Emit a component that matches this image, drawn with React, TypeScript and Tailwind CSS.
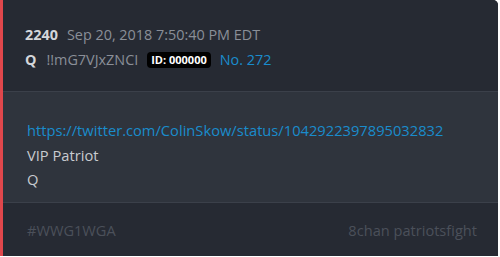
export default function App() {
  return (
    <div className="w-[500px] h-[257px] bg-white" style={{ fontFamily: '"Open Sans", sans-serif' }}>
      <div className="w-[498px] h-[256px] flex flex-col border-l-[3px] border-[#e0474c] rounded-tr-[5px] overflow-hidden bg-[#2f343d]">
        <div className="h-[92px] bg-[#262a33] border-b border-[#3b404a] pl-[22px] pt-[25px] flex flex-col gap-[5px]">
          <div className="flex items-baseline gap-[9px] text-[14.4px] leading-[20px]">
            <span className="font-bold text-[#d4d6da]">2240</span>
            <span className="text-[#8a8f98]">Sep 20, 2018 7:50:40 PM EDT</span>
          </div>
          <div className="flex items-center text-[14.4px] leading-[20px]">
            <span className="font-bold text-[#d4d6da]">Q</span>
            <span className="text-[#8a8f98] ml-[10px]">!!mG7VJxZNCI</span>
            <span className="ml-[9px] bg-black text-white font-bold text-[11px] leading-[16px] px-[4px] rounded-[4px]">ID: 000000</span>
            <span className="ml-[9px] text-[#1a8ccc]">No. 272</span>
          </div>
        </div>
        <div className="h-[111px] bg-[#2f343d] border-b border-[#3b404a] pl-[24px] pt-[26px] flex flex-col text-[14.7px] leading-[24.5px] text-[#c8cbd0]">
          <span className="text-[#1a8ccc]">https://twitter.com/ColinSkow/status/1042922397895032832</span>
          <span>VIP Patriot</span>
          <span>Q</span>
        </div>
        <div className="flex-1 bg-[#262a33] flex items-center justify-between pl-[24px] pr-[21px] pt-[3px] text-[14.6px] text-[#4b505a]">
          <span>#WWG1WGA</span>
          <span>8chan patriotsfight</span>
        </div>
      </div>
    </div>
  );
}
